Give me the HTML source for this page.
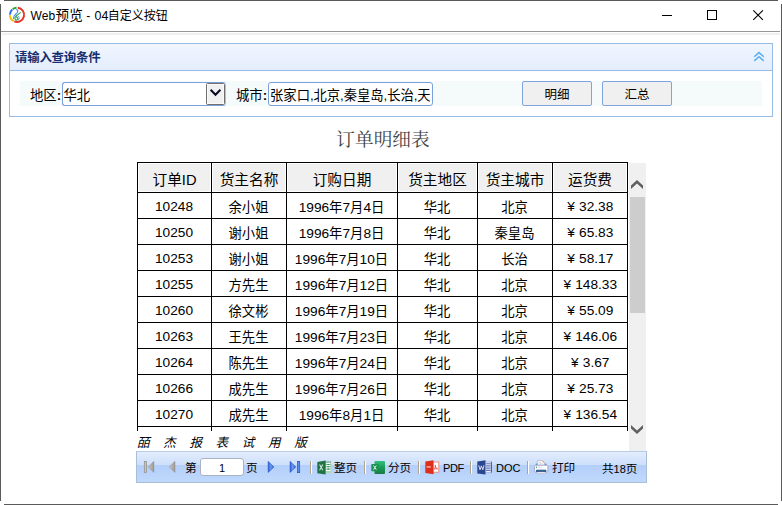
<!DOCTYPE html>
<html lang="zh-CN">
<head>
<meta charset="utf-8">
<title>Web预览 - 04自定义按钮</title>
<style>
html,body{margin:0;padding:0}
body{width:782px;height:505px;position:relative;overflow:hidden;background:#fff;font-family:"Liberation Sans","Noto Sans CJK SC",sans-serif;color:#000;font-size:12px}
.a{position:absolute}
/* window frame */
.bd{position:absolute;background:#5a5a5a}
#titlebar{left:1px;top:1px;width:780px;height:30px;background:#fff}
#wtitle{left:29.6px;top:-0.6px;height:31px;line-height:31px;font-size:12px;white-space:nowrap}
#sep1{left:1px;top:31px;width:779px;height:1px;background:#979797}
#sep2{left:2px;top:33px;width:778px;height:2px;background:#f0f0f0}
/* query panel */
#panel{left:9px;top:43px;width:762px;height:72px;border:1px solid #99bbe8;background:#fff}
#phd{left:0;top:0;width:762px;height:26px;border-bottom:1px solid #99bbe8;background:linear-gradient(#f1f6fe,#e3edfd)}
#phd .t{left:5px;top:1px;line-height:27px;font-size:12.4px;letter-spacing:-.2px;color:#152f70;white-space:nowrap;font-weight:bold}
#band{left:10px;top:37px;width:742px;height:25px;background:#f5fafa}
.lbl{font-size:13.33px;white-space:nowrap;line-height:25px;top:38.5px}
.fld{top:38px;height:22px;border:1px solid #7a9fd9;border-radius:3px;background:#fff;font-size:13.33px;line-height:26px;white-space:nowrap;overflow:hidden}
.btn{top:37px;width:68px;height:23px;border:1px solid #7fa3dc;border-radius:2px;background:#f0f0f0;font-size:12.5px;line-height:26px;text-align:center}
.fld i{font-style:normal;margin:0 -.1px}
/* report */
#rtitle{left:0;top:125.5px;width:766px;text-align:center;font-size:18.67px;line-height:28px;color:#444;white-space:nowrap;font-family:"Liberation Serif","Noto Serif CJK SC",serif}
#tview{left:137px;top:162px;width:491px;height:269px;overflow:hidden}
table{border-collapse:separate;border-spacing:0;table-layout:fixed;width:491px;font-size:13.7px}
td .c{font-size:13.33px}
td,th{box-sizing:border-box;border-left:1px solid #000;border-top:1px solid #000;padding:2px 1px 0 0;text-align:center;white-space:nowrap;font-weight:normal;height:26px;overflow:hidden}
th{height:30px;font-size:14.67px;background:#f0f0f0;background-clip:content-box;padding:1px}
th span{position:relative;top:1px}
th span span{top:0}
td:last-child,th:last-child{border-right:1px solid #000}
.yen{display:inline-block;width:13.33px;text-align:left;padding-left:1.5px;box-sizing:border-box}
#sbar{left:629px;top:163px;width:17px;height:288px;background:#f0f0f0}
#thumb{left:1px;top:34px;width:15px;height:116px;background:#cdcdcd}
#wm{left:137px;top:433.5px;font-size:12.5px;line-height:18px;white-space:nowrap;letter-spacing:13.7px;font-style:italic}
/* toolbar */
#tb{left:136px;top:451px;width:509px;height:30px;border:1px solid #a9bfd9;border-top-color:#b9cde6;background:linear-gradient(#e3edfd 0%,#cddffb 42%,#b3cffa 44%,#c0d8fc 100%);font-size:12px;white-space:nowrap}
#tb .t{top:0;line-height:31px;font-size:11.6px}
#tb .l{font-size:11px;line-height:33px}
.sp{top:9px;width:1px;height:13px;background:#b0a48c;border-right:1px solid #fff}
#pg{left:63px;top:6px;width:42px;height:16px;border:1px solid #a9b3c3;border-radius:3px;background:#fff;text-align:center;font-size:11px;line-height:18.5px}
</style>
</head>
<body>
<!-- window frame -->
<div class="bd" style="left:4px;top:0;width:774px;height:1px"></div>
<div class="bd" style="left:4px;top:504px;width:774px;height:1px"></div>
<div class="bd" style="left:0;top:4px;width:1px;height:497px"></div>
<div class="bd" style="left:781px;top:4px;width:1px;height:497px"></div>

<!-- title bar -->
<div id="titlebar" class="a">
 <svg class="a" style="left:7px;top:5px" width="18" height="18" viewBox="0 0 18 18" fill="none" stroke-width="2">
  <path d="M9.74 1.79A7.1 7.1 0 1 1 6.34 15.43" stroke="#ea3323"/>
  <path d="M5.78 15.18A7.1 7.1 0 0 1 1.91 9.22" stroke="#fbbc05"/>
  <path d="M1.90 8.60A7.1 7.1 0 0 1 4.25 3.57" stroke="#2f6df6"/>
  <path d="M4.73 3.18A7.1 7.1 0 0 1 8.50 1.77" stroke="#1fa53a"/>
  <path d="M8 3.7C10.6 3.4 10.2 6 8.2 7.6C6.2 9.4 5.2 11 5.7 13" stroke="#4a86f7" stroke-width="1.1"/>
  <path d="M9.6 10C11.6 10.4 11.9 13 10.2 14" stroke="#6f9ff8" stroke-width="1"/>
  <path d="M12.7 6.3C10.2 8.6 6.6 10 6.9 12.6C7.1 14.6 9.9 14.6 9.9 12.6C9.9 11.2 8.2 10.6 7.2 11.1" stroke="#27a844" stroke-width="1.1"/>
 </svg>
 <div id="wtitle" class="a">Web<span class="pv" style="font-size:13.6px;margin-left:.5px"><span class="c">预览</span></span><span style="margin:0 1px 0 .2px"> - </span><span style="font-size:12.4px">04</span><span style="margin-left:-.6px"><span class="c">自定义按钮</span></span></div>
 <svg class="a" style="left:656px;top:4px" width="120" height="22" viewBox="0 0 120 22" fill="none" stroke="#000" stroke-width="1">
  <path d="M5 10.5H15"/>
  <rect x="50.5" y="5.5" width="9" height="9"/>
  <path d="M96.3 5.3L105.9 14.9M105.9 5.3L96.3 14.9" stroke-width="1.1"/>
 </svg>
</div>
<div id="sep1" class="a"></div>
<div id="sep2" class="a"></div>

<!-- query panel -->
<div id="panel" class="a">
 <div id="phd" class="a">
  <div class="t a"><span class="c">请输入查询条件</span></div>
  <svg class="a" style="left:743px;top:7px" width="12" height="12" viewBox="0 0 12 12" fill="none" stroke="#59aef0" stroke-width="1.5">
   <path d="M1.2 5.7L6 1.6L10.8 5.7"/><path d="M1.2 9.9L6 5.8L10.8 9.9"/>
  </svg>
 </div>
 <div id="band" class="a"></div>
 <div class="lbl a" style="left:20px"><span class="c">地区</span><b>:</b></div>
 <div class="fld a" style="left:52px;width:162px;border-right-color:#a3c0ee;border-radius:3px"><span style="padding-left:.5px"><span class="c">华北</span></span>
  <div class="a" style="left:143px;top:0;width:17px;height:20px;background:#f0f0f0;border:1px solid #6f6f6f;border-radius:1.5px;box-shadow:inset 0 0 0 1px #fafafa">
   <svg class="a" style="left:2px;top:4.4px" width="13" height="10" viewBox="0 0 13 10" fill="none" stroke="#0a0a23" stroke-width="2"><path d="M1.6 1.7L6.5 6.8L11.4 1.7"/></svg>
  </div>
 </div>
 <div class="lbl a" style="left:226px"><span class="c">城市</span><b>:</b></div>
 <div class="fld a" style="left:258px;width:163px"><span style="padding-left:1px"><span class="c">张家口</span><i>,</i><span class="c">北京</span><i>,</i><span class="c">秦皇岛</span><i>,</i><span class="c">长治</span><i>,</i><span class="c">天</span></span></div>
 <div class="btn a" style="left:512px"><span class="c">明细</span></div>
 <div class="btn a" style="left:592px"><span class="c">汇总</span></div>
</div>

<!-- report title -->
<div id="rtitle" class="a"><span class="c">订单明细表</span></div>

<!-- report table -->
<div id="tview" class="a">
<table>
<colgroup><col style="width:74px"><col style="width:75px"><col style="width:111px"><col style="width:80px"><col style="width:75px"><col style="width:76px"></colgroup>
<tr><th><span><span class="c">订单</span>ID</span></th><th><span><span class="c">货主名称</span></span></th><th><span><span class="c">订购日期</span></span></th><th><span><span class="c">货主地区</span></span></th><th><span><span class="c">货主城市</span></span></th><th><span><span class="c">运货费</span></span></th></tr>
<tr><td>10248</td><td><span class="c">余小姐</span></td><td>1996<span class="c">年</span>7<span class="c">月</span>4<span class="c">日</span></td><td><span class="c">华北</span></td><td><span class="c">北京</span></td><td><span class="yen">¥</span>32.38</td></tr>
<tr><td>10250</td><td><span class="c">谢小姐</span></td><td>1996<span class="c">年</span>7<span class="c">月</span>8<span class="c">日</span></td><td><span class="c">华北</span></td><td><span class="c">秦皇岛</span></td><td><span class="yen">¥</span>65.83</td></tr>
<tr><td>10253</td><td><span class="c">谢小姐</span></td><td>1996<span class="c">年</span>7<span class="c">月</span>10<span class="c">日</span></td><td><span class="c">华北</span></td><td><span class="c">长治</span></td><td><span class="yen">¥</span>58.17</td></tr>
<tr><td>10255</td><td><span class="c">方先生</span></td><td>1996<span class="c">年</span>7<span class="c">月</span>12<span class="c">日</span></td><td><span class="c">华北</span></td><td><span class="c">北京</span></td><td><span class="yen">¥</span>148.33</td></tr>
<tr><td>10260</td><td><span class="c">徐文彬</span></td><td>1996<span class="c">年</span>7<span class="c">月</span>19<span class="c">日</span></td><td><span class="c">华北</span></td><td><span class="c">北京</span></td><td><span class="yen">¥</span>55.09</td></tr>
<tr><td>10263</td><td><span class="c">王先生</span></td><td>1996<span class="c">年</span>7<span class="c">月</span>23<span class="c">日</span></td><td><span class="c">华北</span></td><td><span class="c">北京</span></td><td><span class="yen">¥</span>146.06</td></tr>
<tr><td>10264</td><td><span class="c">陈先生</span></td><td>1996<span class="c">年</span>7<span class="c">月</span>24<span class="c">日</span></td><td><span class="c">华北</span></td><td><span class="c">北京</span></td><td><span class="yen">¥</span>3.67</td></tr>
<tr><td>10266</td><td><span class="c">成先生</span></td><td>1996<span class="c">年</span>7<span class="c">月</span>26<span class="c">日</span></td><td><span class="c">华北</span></td><td><span class="c">北京</span></td><td><span class="yen">¥</span>25.73</td></tr>
<tr><td>10270</td><td><span class="c">成先生</span></td><td>1996<span class="c">年</span>8<span class="c">月</span>1<span class="c">日</span></td><td><span class="c">华北</span></td><td><span class="c">北京</span></td><td><span class="yen">¥</span>136.54</td></tr>
<tr><td>10271</td><td><span class="c">成先生</span></td><td>1996<span class="c">年</span>8<span class="c">月</span>1<span class="c">日</span></td><td><span class="c">华北</span></td><td><span class="c">北京</span></td><td><span class="yen">¥</span>4.54</td></tr>
</table>
</div>
<div id="sbar" class="a">
 <svg class="a" style="left:2px;top:17px" width="12" height="9" viewBox="0 0 12 9" fill="#606060"><path d="M0 5.6L6 0L12 5.6V9L6 3.5L0 9Z"/></svg>
 <div id="thumb" class="a"></div>
 <svg class="a" style="left:2px;top:262px" width="12" height="9" viewBox="0 0 12 9" fill="#606060"><path d="M0 3.4L6 9L12 3.4V0L6 5.5L0 0Z"/></svg>
</div>
<div id="wm" class="a"><span class="c">皕杰报表试用版</span></div>

<!-- paging toolbar -->
<div id="tb" class="a">
 <svg width="0" height="0" class="a"><defs>
  <linearGradient id="gg" x1="0" y1="0" x2="1" y2="0"><stop offset="0" stop-color="#cfccc8"/><stop offset="1" stop-color="#9a9691"/></linearGradient>
  <linearGradient id="gb" x1="0" y1="0" x2="1" y2="0"><stop offset="0" stop-color="#2a5bd0"/><stop offset=".45" stop-color="#6a9af4"/><stop offset="1" stop-color="#2d62d8"/></linearGradient>
 </defs></svg>
 <svg class="a" style="left:6px;top:9px" width="12" height="12" viewBox="0 0 12 12"><rect x="1.3" y="0.4" width="2.2" height="11.2" fill="#c9c6c2" stroke="#8f8b86" stroke-width=".7"/><path d="M10.8 0.5V11.3L5.3 5.9Z" fill="url(#gg)" stroke="#8f8b86" stroke-width=".6"/></svg>
 <svg class="a" style="left:31px;top:9px" width="8" height="12" viewBox="0 0 8 12"><path d="M6.9 0.5V11.3L1.3 5.9Z" fill="url(#gg)" stroke="#8f8b86" stroke-width=".6"/></svg>
 <div class="t a" style="left:48px"><span class="c">第</span></div>
 <div id="pg" class="a">1</div>
 <div class="t a" style="left:109px"><span class="c">页</span></div>
 <svg class="a" style="left:130px;top:9px" width="8" height="12" viewBox="0 0 8 12"><path d="M1.2 0.4V11.4L6.9 5.9Z" fill="url(#gb)" stroke="#2452c4" stroke-width=".6"/></svg>
 <svg class="a" style="left:152px;top:9px" width="12" height="12" viewBox="0 0 12 12"><path d="M1.1 0.4V11.4L6.8 5.9Z" fill="url(#gb)" stroke="#2452c4" stroke-width=".6"/><rect x="8.5" y="0.4" width="2.2" height="11.3" fill="#5c8cee" stroke="#2452c4" stroke-width=".7"/></svg>
 <div class="sp a" style="left:173px"></div>
 <!-- excel (whole page) -->
 <svg class="a" style="left:180px;top:8px" width="15" height="15" viewBox="0 0 15 15">
  <defs><linearGradient id="xs" x1="0" y1="0" x2="0" y2="1"><stop offset="0" stop-color="#6fb08a"/><stop offset="1" stop-color="#b7d9c4"/></linearGradient></defs>
  <rect x="8" y="1.4" width="6" height="11.8" fill="url(#xs)"/>
  <path d="M8.6 3.4h5M8.6 5.5h5M8.6 7.9h5M8.6 10.4h5" stroke="#f4faf6" stroke-width="1.1"/>
  <path d="M10.4 4.45h1.8M10.4 6.7h1.8M10.4 9.15h1.8" stroke="#2d8a55" stroke-width="1.1"/>
  <path d="M0.3 2L8.6 0.4V14.6L0.3 13.2Z" fill="#1f7446"/>
  <path d="M2.6 4.6L5.8 10.2M5.8 4.6L2.6 10.2" stroke="#d6e8d9" stroke-width="1.05"/>
 </svg>
 <div class="t a" style="left:197px"><span class="c">整页</span></div>
 <div class="sp a" style="left:227px"></div>
 <!-- excel (paged) -->
 <svg class="a" style="left:234px;top:8px" width="15" height="15" viewBox="0 0 15 15">
  <defs><linearGradient id="xg" x1="0" y1="0" x2="0" y2="1"><stop offset="0" stop-color="#31c27d"/><stop offset=".5" stop-color="#1b9a58"/><stop offset="1" stop-color="#167a43"/></linearGradient></defs>
  <rect x="3.5" y="1" width="10.5" height="13" rx="1" fill="url(#xg)"/>
  <rect x="0.3" y="4" width="7.2" height="7.2" rx=".6" fill="#1c9152"/>
  <path d="M2.5 5.5L5.3 9.7M5.3 5.5L2.5 9.7" stroke="#dcefe0" stroke-width="1"/>
 </svg>
 <div class="t a" style="left:251px"><span class="c">分页</span></div>
 <div class="sp a" style="left:281px"></div>
 <!-- pdf -->
 <svg class="a" style="left:288px;top:8px" width="15" height="15" viewBox="0 0 15 15">
  <rect x="8" y="2" width="5.8" height="10.2" fill="#fff" stroke="#ee7b6d" stroke-width=".8"/>
  <path d="M9.3 9.2C10.2 7.8 10.6 6.4 10.3 5.2C10 6.6 11.2 8.4 12.6 8.8C11.4 8.6 10.2 8.8 9.3 9.2Z" fill="none" stroke="#e23a2a" stroke-width=".8"/>
  <path d="M0.3 1.6L8.5 0.2V14.2L0.3 13Z" fill="#e02e1d"/>
  <path d="M1.6 6.9h4.2" stroke="#f7c4bd" stroke-width="1.3"/>
 </svg>
 <div class="t l a" style="left:306px;letter-spacing:-.35px">PDF</div>
 <div class="sp a" style="left:333px"></div>
 <!-- doc -->
 <svg class="a" style="left:340px;top:8px" width="16" height="15" viewBox="0 0 16 15">
  <rect x="8" y="1.7" width="7" height="11.1" fill="#e9ecf6"/>
  <path d="M14.4 1.7V12.8" stroke="#3f5aa6" stroke-width="1.1"/>
  <path d="M8 1.9h6.6M8 12.6h6.6" stroke="#8c9ccc" stroke-width=".6"/>
  <path d="M9 3.7h4.6M9 5.9h4.6M9 8.1h4.6M9 10.3h4.6" stroke="#6478b8" stroke-width="1.15"/>
  <path d="M0.3 1.6L8.5 0.3V14.5L0.3 13.4Z" fill="#2a4691"/>
  <path d="M1.8 5.3L3 9.8L4.4 5.9L5.8 9.8L7 5.3" fill="none" stroke="#dfe4f2" stroke-width=".95"/>
 </svg>
 <div class="t l a" style="left:359px">DOC</div>
 <div class="sp a" style="left:390px"></div>
 <!-- print -->
 <svg class="a" style="left:397px;top:8px" width="15" height="15" viewBox="0 0 15 15">
  <defs><linearGradient id="ps" x1="0" y1="0" x2="0" y2="1"><stop offset="0" stop-color="#1f86a8"/><stop offset="1" stop-color="#27306e"/></linearGradient></defs>
  <circle cx="2.6" cy="4.4" r="0.9" fill="#3a8fc4"/><circle cx="11.6" cy="4.4" r="0.9" fill="#3a8fc4"/>
  <path d="M3.4 5.4V0.6H8.6L10.6 2.6V5.4Z" fill="#fdfdfe" stroke="#a9a9c9" stroke-width=".7"/>
  <path d="M8.6 0.6V2.6H10.6Z" fill="#d79a4a"/>
  <path d="M4.6 2.4h2.4M4.6 3.9h4.6" stroke="#c9cbd8" stroke-width=".8"/>
  <rect x="0.5" y="5.2" width="13.4" height="6.9" rx="1.2" fill="#fdfdff" stroke="#a3a3c8" stroke-width=".9"/>
  <rect x="1.9" y="6.6" width="1" height="1.4" fill="#3a9a55"/>
  <path d="M4 7.2h3.6" stroke="#cfd1de" stroke-width=".8"/>
  <path d="M2.6 9.2h9" stroke="#f0c9cf" stroke-width=".5"/>
  <rect x="2" y="9.8" width="10.2" height="2.1" rx=".4" fill="url(#ps)"/>
  <rect x="3" y="12" width="8.2" height="1.5" fill="#fbfbfe" stroke="#b3b3d3" stroke-width=".6"/>
 </svg>
 <div class="t a" style="left:415px"><span class="c">打印</span></div>
 <div class="t a" style="left:465px;top:.75px"><span class="c">共</span><span class="l">18</span><span class="c">页</span></div>
</div>
</body>
</html>
